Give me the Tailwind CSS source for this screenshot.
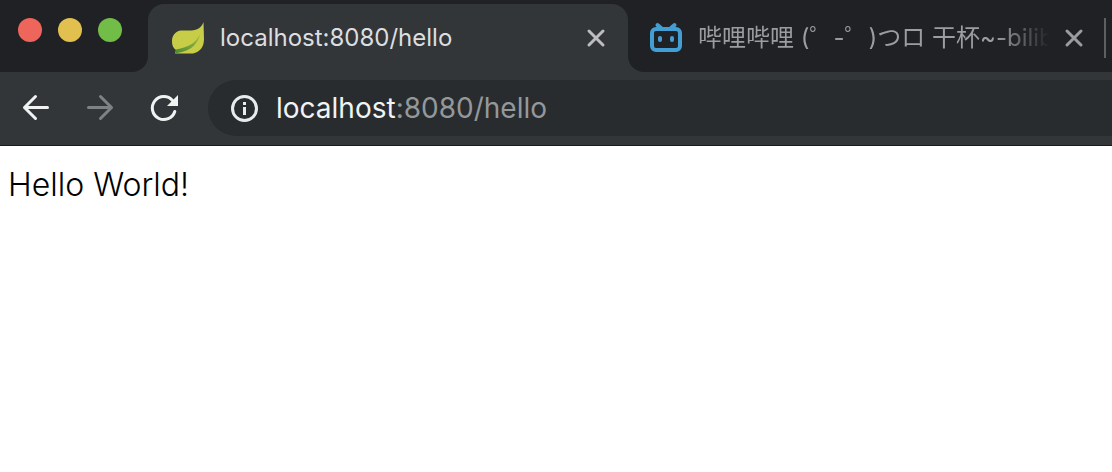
<!DOCTYPE html>
<html lang="zh-CN">
<head>
<meta charset="utf-8">
<meta name="viewport" content="width=device-width, initial-scale=1">
<title>localhost:8080/hello</title>
<script src="https://cdn.jsdelivr.net/npm/@tailwindcss/browser@4"></script>
</head>
<body class="flex min-h-screen flex-col bg-white font-['Inter','Noto_Sans_CJK_SC',sans-serif]">
<header class="border-b border-[#1c191c] bg-[#323639]">
  <div class="flex h-18 overflow-hidden">
    <div class="flex w-37 shrink-0 items-start gap-4 rounded-br-2xl bg-[#202124] pt-[18px] pl-[18px]">
      <button aria-label="Close window" class="size-6 rounded-full bg-[#ee655b]"></button>
      <button aria-label="Minimize window" class="size-6 rounded-full bg-[#e2c050]"></button>
      <button aria-label="Zoom window" class="size-6 rounded-full bg-[#72bd48]"></button>
    </div>
    <div class="w-120 shrink-0 bg-[#202124] pt-1">
      <div class="flex h-full items-center rounded-t-2xl bg-[#323639] pr-5 pl-6">
        <svg class="size-8 shrink-0" viewBox="0 0 32 32" aria-hidden="true">
          <defs>
            <linearGradient id="vein" x1="4" y1="30" x2="28" y2="12" gradientUnits="userSpaceOnUse">
              <stop offset="0" stop-color="#4f8c35"/>
              <stop offset="0.6" stop-color="#7fa63b"/>
              <stop offset="1" stop-color="#a9bb42"/>
            </linearGradient>
          </defs>
          <path d="M31.500 0C30 5 26 8 19 8.500H9C4 9 0 13 0 19C0 24 1.500 26 4 28L3 31.500H21C28 30 32 25 32 17Z" fill="#c7cd47"/>
          <path d="M28.500 11C25 20 17 25.500 4 27.500L3 31.500L10 30C19 28 26 22 28.500 11Z" fill="url(#vein)"/>
        </svg>
        <span class="ml-4 flex-1 truncate text-2xl text-[#dcdee0]">localhost:8080/hello</span>
        <button aria-label="Close tab" class="flex size-6 shrink-0 items-center justify-center">
          <svg class="size-6" viewBox="0 0 24 24" fill="none" stroke="#bcbdbe" stroke-width="3" stroke-linecap="round" aria-hidden="true"><path d="M5 5L19 19M19 5L5 19"/></svg>
        </button>
      </div>
    </div>
    <div class="flex min-w-0 flex-1 items-center rounded-bl-2xl bg-[#202124] pt-1 pl-[22px]">
      <svg class="size-8 shrink-0" viewBox="0 0 32 32" fill="none" stroke="#439fd3" stroke-width="4" stroke-linecap="round" aria-hidden="true">
        <rect x="2" y="7" width="28" height="21" rx="4"/>
        <path d="M7.500 3L11 6M24.500 3L21 6"/>
        <g fill="#439fd3" stroke="none"><rect x="8" y="14" width="4" height="6" rx="2"/><rect x="20" y="14" width="4" height="6" rx="2"/></g>
      </svg>
      <span class="ml-4 min-w-0 flex-1 overflow-hidden mask-r-from-85% mask-r-to-100% text-2xl whitespace-nowrap text-[#9b9da0]">哔哩哔哩 (゜-゜)つロ 干杯~-bilibili</span>
      <button aria-label="Close tab" class="ml-3 flex size-6 shrink-0 items-center justify-center">
        <svg class="size-6" viewBox="0 0 24 24" fill="none" stroke="#9b9c9e" stroke-width="3" stroke-linecap="round" aria-hidden="true"><path d="M5 5L19 19M19 5L5 19"/></svg>
      </button>
      <span class="mr-[6px] ml-[18px] h-10 w-[2px] shrink-0 bg-[#5d5f62]"></span>
    </div>
  </div>
  <div class="flex items-center pt-2 pb-[9px] pl-5">
    <nav class="flex shrink-0 gap-8">
      <button aria-label="Back" class="size-8"><svg class="size-8" viewBox="0 0 32 32" fill="none" stroke="#f1f3f3" stroke-width="3" stroke-linecap="round" stroke-linejoin="round" aria-hidden="true"><path d="M27.500 15.500H4.500M15.500 4.500L4.500 15.500L15.500 26.500"/></svg></button>
      <button aria-label="Forward" class="size-8"><svg class="size-8" viewBox="0 0 32 32" fill="none" stroke="#7f8284" stroke-width="3" stroke-linecap="round" stroke-linejoin="round" aria-hidden="true"><path d="M4.500 15.500H27.500M16.500 4.500L27.500 15.500L16.500 26.500"/></svg></button>
      <button aria-label="Reload" class="size-8"><svg class="size-8" viewBox="0 0 32 32" fill="none" stroke="#f1f3f3" stroke-width="3" stroke-linecap="round" aria-hidden="true"><path d="M26.800 19.500A11.500 11.500 0 1 1 24.500 8.500"/><path d="M30 3V14H19Z" fill="#f1f3f3" stroke="none"/></svg></button>
    </nav>
    <div class="ml-7 flex h-14 flex-1 items-center rounded-l-full bg-[#282c2f] pl-[22px]">
      <button aria-label="View site information" class="size-7 shrink-0"><svg class="size-7" viewBox="0 0 28 28" fill="none" stroke="#e8eaed" stroke-width="3" aria-hidden="true"><circle cx="14.500" cy="14.500" r="12"/><path d="M14.500 8V11M14.500 13V21"/></svg></button>
      <span class="ml-[18px] text-[28px] leading-8 whitespace-nowrap text-[#94989b]"><span class="text-[#f1f3f4]">localhost</span>:8080/hello</span>
    </div>
  </div>
</header>
<main class="px-2 py-4">
  <p class="text-[32px] leading-[46px] font-[350] text-black">Hello World!</p>
</main>
</body>
</html>
